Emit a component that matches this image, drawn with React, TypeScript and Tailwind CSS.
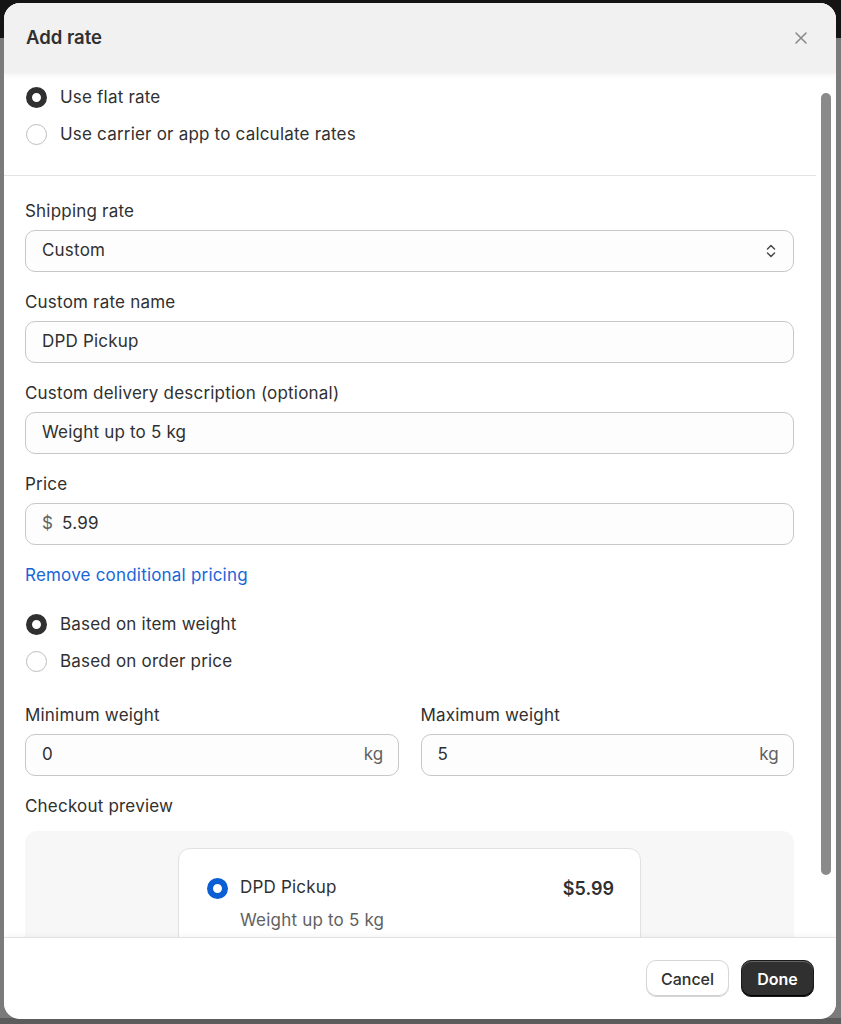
import React from "react";

const font = { fontFamily: "Inter, 'Noto Sans', sans-serif" };

function Radio({ checked, label }: { checked?: boolean; label: string }) {
  return (
    <div className="flex h-[24px] items-center gap-[13px] pl-[1px]">
      {checked ? (
        <span className="box-border h-[21px] w-[21px] rounded-full border-[6px] border-[#303030] bg-white" />
      ) : (
        <span className="box-border h-[21px] w-[21px] rounded-full border border-[#bdbdbd] bg-white" />
      )}
      <span className="text-[17px] leading-[24px] tracking-[0.2px] text-[#303030]">{label}</span>
    </div>
  );
}

function Field({ label, children, className = "" }: { label: string; children: React.ReactNode; className?: string }) {
  return (
    <div className={"flex flex-col " + className}>
      <div className="text-[17px] leading-[20px] tracking-[0.2px] text-[#303030]">{label}</div>
      <div className="mt-[9px]">{children}</div>
    </div>
  );
}

function Box({ children }: { children: React.ReactNode }) {
  return (
    <div className="box-border flex h-[42px] items-center rounded-[10px] border border-[#c7c7c7] bg-[#fdfdfd] pl-[16px] pr-[14px] text-[17px] tracking-[0.2px] text-[#303030]">
      {children}
    </div>
  );
}

export default function App() {
  return (
    <div className="relative h-[1024px] w-[841px] overflow-hidden bg-[#7b7b7b]" style={font}>
      {/* page behind overlay */}
      <div className="h-[38px] bg-[#141414]" />
      <div className="absolute bottom-0 left-0 h-[6px] w-full bg-[#5c5c5c]" />

      {/* modal */}
      <div className="absolute left-[4px] top-[3px] flex h-[1016px] w-[832px] flex-col overflow-hidden rounded-[16px] bg-white">
        {/* header */}
        <div className="relative z-10 flex h-[70px] shrink-0 items-center justify-between bg-[#f1f1f1] pl-[22px] pr-[28px] shadow-[0_1px_6px_rgba(0,0,0,0.08)]">
          <span className="text-[18.5px] font-semibold text-[#303030]">Add rate</span>
          <svg width="14" height="14" viewBox="0 0 14 14" fill="none">
            <path d="M2 2l10 10M12 2L2 12" stroke="#8a8a8a" strokeWidth="1.6" strokeLinecap="round" />
          </svg>
        </div>

        {/* body */}
        <div className="flex min-h-0 flex-1">
          <div className="min-h-0 flex-1 overflow-hidden">
            <div className="flex flex-col gap-[13px] px-[21px] pb-[29px] pt-[12px]">
              <Radio checked label="Use flat rate" />
              <Radio label="Use carrier or app to calculate rates" />
            </div>
            <div className="h-px bg-[#e3e3e3]" />
            <div className="flex flex-col pl-[21px] pr-[22px] pt-[25px]">
              <Field label="Shipping rate">
                <Box>
                  <span className="flex-1">Custom</span>
                  <svg width="16" height="20" viewBox="0 0 16 20" fill="none">
                    <path d="M4.5 8l3.5-3.5L11.5 8M4.5 12l3.5 3.5 3.5-3.5" stroke="#4a4a4a" strokeWidth="1.5" strokeLinecap="round" strokeLinejoin="round" />
                  </svg>
                </Box>
              </Field>
              <Field label="Custom rate name" className="mt-[20px]">
                <Box>DPD Pickup</Box>
              </Field>
              <Field label="Custom delivery description (optional)" className="mt-[20px]">
                <Box>Weight up to 5 kg</Box>
              </Field>
              <Field label="Price" className="mt-[20px]">
                <Box>
                  <span className="mr-[9px] text-[#616161]">$</span>
                  <span>5.99</span>
                </Box>
              </Field>
              <div className="mt-[20px] text-[17px] leading-[20px] tracking-[0.2px] text-[#1866d9]">Remove conditional pricing</div>
              <div className="mt-[27px] flex flex-col gap-[13px]">
                <Radio checked label="Based on item weight" />
                <Radio label="Based on order price" />
              </div>
              <div className="mt-[32px] grid grid-cols-2 gap-[22px]">
                <Field label="Minimum weight">
                  <Box>
                    <span className="flex-1">0</span>
                    <span className="text-[#616161]">kg</span>
                  </Box>
                </Field>
                <Field label="Maximum weight">
                  <Box>
                    <span className="flex-1">5</span>
                    <span className="text-[#616161]">kg</span>
                  </Box>
                </Field>
              </div>
              <div className="mt-[20px] text-[17px] leading-[20px] tracking-[0.2px] text-[#303030]">Checkout preview</div>
              <div className="mt-[15px] flex justify-center rounded-[12px] bg-[#f7f7f7] pt-[17px]">
                <div className="box-border w-[463px] rounded-[12px] border border-[#e1e1e1] bg-white pb-[40px] pl-[28px] pr-[26px] pt-[27px]">
                  <div className="flex h-[24px] items-center">
                    <span className="box-border h-[21px] w-[21px] rounded-full border-[6px] border-[#0b5fd3] bg-white" />
                    <span className="ml-[12px] flex-1 text-[17px] tracking-[0.2px] text-[#303030]">DPD Pickup</span>
                    <span className="text-[18px] font-semibold text-[#303030]">$5.99</span>
                  </div>
                  <div className="ml-[33px] mt-[8px] text-[17px] leading-[24px] tracking-[0.2px] text-[#616161]">Weight up to 5 kg</div>
                </div>
              </div>
            </div>
          </div>
          {/* scrollbar */}
          <div className="w-[20px] shrink-0 pl-[5px] pt-[20px]">
            <div className="h-[782px] w-[10px] rounded-full bg-[#8a8a8a]" />
          </div>
        </div>

        {/* footer */}
        <div className="relative z-10 flex h-[82px] shrink-0 items-center justify-end gap-[12px] border-t border-[#e3e3e3] bg-white pr-[22px] shadow-[0_-1px_6px_rgba(0,0,0,0.05)]">
          <button className="h-[37px] w-[83px] rounded-[10px] border border-[#d6d6d6] bg-white text-[16px] font-medium text-[#303030] shadow-[inset_0_-1px_0_#d0d0d0]">
            Cancel
          </button>
          <button className="h-[37px] w-[73px] rounded-[10px] border border-[#1a1a1a] bg-[#303030] text-[16px] font-semibold text-white shadow-[inset_0_1px_0_rgba(255,255,255,0.25),inset_0_-1px_0_#000]">
            Done
          </button>
        </div>
      </div>
    </div>
  );
}
